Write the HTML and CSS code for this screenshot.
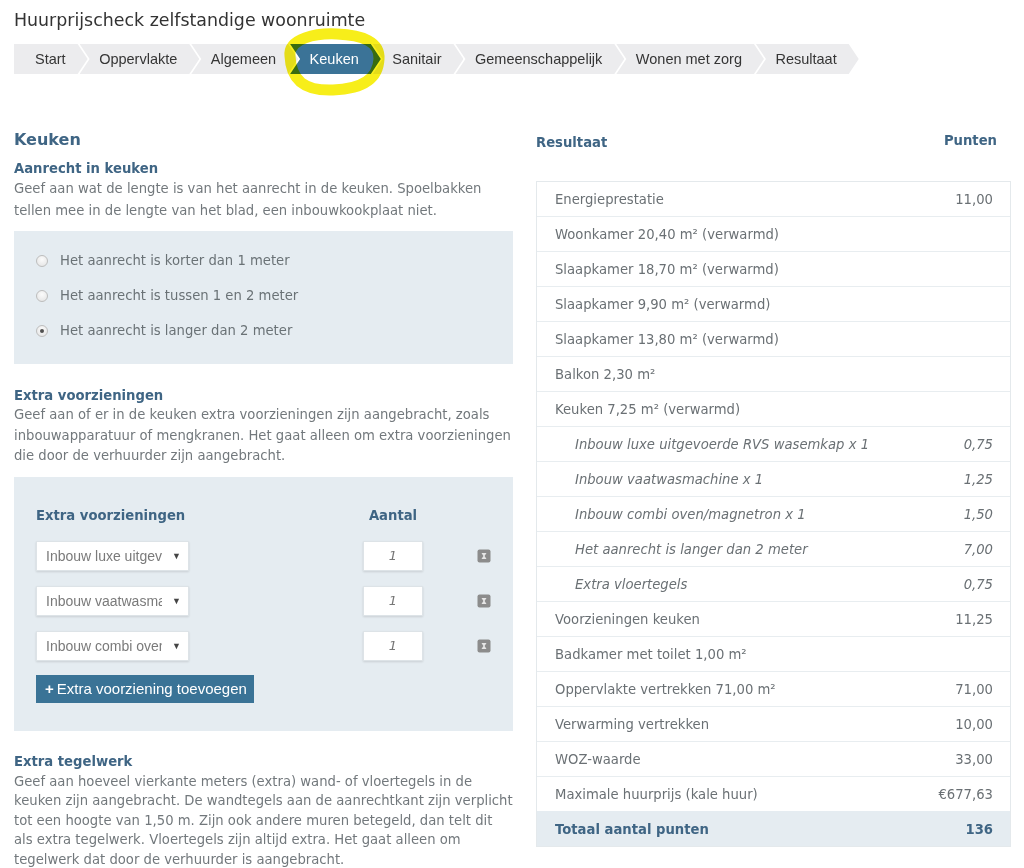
FILE: index.html
```html
<!DOCTYPE html>
<html lang="nl">
<head>
<meta charset="utf-8">
<title>Huurprijscheck zelfstandige woonruimte</title>
<link rel="stylesheet" href="styles.css">
</head>
<body>
<div class="page">
  <h1 class="title">Huurprijscheck zelfstandige woonruimte</h1>
  <nav class="crumbs">
    <span class="crumb first">Start</span>
    <span class="crumb">Oppervlakte</span>
    <span class="crumb">Algemeen</span>
    <span class="crumb active">Keuken</span>
    <span class="crumb">Sanitair</span>
    <span class="crumb">Gemeenschappelijk</span>
    <span class="crumb">Wonen met zorg</span>
    <span class="crumb">Resultaat</span>
  </nav>
  <svg class="highlight" width="112" height="76" viewBox="0 0 112 76" aria-hidden="true">
    <path d="M13 30 C 11 12, 40 7, 60 8 C 86 9, 103 16, 102 33 C 101 54, 84 63, 56 64 C 28 65, 14 55, 13 30 Z" fill="none" stroke="#f7ee1a" stroke-width="11"/>
  </svg>

  <div class="columns">
    <section class="form">
      <h2 class="section-title">Keuken</h2>

      <h3 class="q-title">Aanrecht in keuken</h3>
      <p class="q-desc q-desc-wide">Geef aan wat de lengte is van het aanrecht in de keuken. Spoelbakken tellen mee in de lengte van het blad, een inbouwkookplaat niet.</p>
      <div class="panel radios">
        <label class="radio"><span class="dot"></span>Het aanrecht is korter dan 1 meter</label>
        <label class="radio"><span class="dot"></span>Het aanrecht is tussen 1 en 2 meter</label>
        <label class="radio"><span class="dot checked"></span>Het aanrecht is langer dan 2 meter</label>
      </div>

      <h3 class="q-title q-gap">Extra voorzieningen</h3>
      <p class="q-desc">Geef aan of er in de keuken extra voorzieningen zijn aangebracht, zoals inbouwapparatuur of mengkranen. Het gaat alleen om extra voorzieningen die door de verhuurder zijn aangebracht.</p>
      <div class="panel items">
        <div class="item-grid">
          <div class="col-head">Extra voorzieningen</div>
          <div class="col-head center">Aantal</div>
          <div></div>

          <div class="select"><span class="select-text">Inbouw luxe uitgevoerde</span><span class="caret">&#9660;</span></div>
          <div class="number">1</div>
          <svg class="del" width="14" height="14" viewBox="0 0 14 14"><rect x="0.5" y="0.5" width="13" height="13" rx="2" fill="#8c8c8c"/><path d="M4.5 4 L9.5 4 L7.6 7 L9.5 10 L4.5 10 L6.4 7 Z" fill="#e6e6e6"/></svg>

          <div class="select"><span class="select-text">Inbouw vaatwasmachine</span><span class="caret">&#9660;</span></div>
          <div class="number">1</div>
          <svg class="del" width="14" height="14" viewBox="0 0 14 14"><rect x="0.5" y="0.5" width="13" height="13" rx="2" fill="#8c8c8c"/><path d="M4.5 4 L9.5 4 L7.6 7 L9.5 10 L4.5 10 L6.4 7 Z" fill="#e6e6e6"/></svg>

          <div class="select"><span class="select-text">Inbouw combi oven/magnetron</span><span class="caret">&#9660;</span></div>
          <div class="number">1</div>
          <svg class="del" width="14" height="14" viewBox="0 0 14 14"><rect x="0.5" y="0.5" width="13" height="13" rx="2" fill="#8c8c8c"/><path d="M4.5 4 L9.5 4 L7.6 7 L9.5 10 L4.5 10 L6.4 7 Z" fill="#e6e6e6"/></svg>
        </div>
        <button class="add-btn" type="button"><b>+</b> Extra voorziening toevoegen</button>
      </div>

      <h3 class="q-title q-gap2">Extra tegelwerk</h3>
      <p class="q-desc q-desc-tight">Geef aan hoeveel vierkante meters (extra) wand- of vloertegels in de keuken zijn aangebracht. De wandtegels aan de aanrechtkant zijn verplicht tot een hoogte van 1,50 m. Zijn ook andere muren betegeld, dan telt dit als extra tegelwerk. Vloertegels zijn altijd extra. Het gaat alleen om tegelwerk dat door de verhuurder is aangebracht.</p>
    </section>

    <aside class="result">
      <div class="result-head"><span>Resultaat</span><span class="punten">Punten</span></div>
      <div class="result-table">
        <div class="row"><span>Energieprestatie</span><span>11,00</span></div>
        <div class="row"><span>Woonkamer 20,40 m² (verwarmd)</span><span></span></div>
        <div class="row"><span>Slaapkamer 18,70 m² (verwarmd)</span><span></span></div>
        <div class="row"><span>Slaapkamer 9,90 m² (verwarmd)</span><span></span></div>
        <div class="row"><span>Slaapkamer 13,80 m² (verwarmd)</span><span></span></div>
        <div class="row"><span>Balkon 2,30 m²</span><span></span></div>
        <div class="row"><span>Keuken 7,25 m² (verwarmd)</span><span></span></div>
        <div class="row sub"><span>Inbouw luxe uitgevoerde RVS wasemkap x 1</span><span>0,75</span></div>
        <div class="row sub"><span>Inbouw vaatwasmachine x 1</span><span>1,25</span></div>
        <div class="row sub"><span>Inbouw combi oven/magnetron x 1</span><span>1,50</span></div>
        <div class="row sub"><span>Het aanrecht is langer dan 2 meter</span><span>7,00</span></div>
        <div class="row sub"><span>Extra vloertegels</span><span>0,75</span></div>
        <div class="row"><span>Voorzieningen keuken</span><span>11,25</span></div>
        <div class="row"><span>Badkamer met toilet 1,00 m²</span><span></span></div>
        <div class="row"><span>Oppervlakte vertrekken 71,00 m²</span><span>71,00</span></div>
        <div class="row"><span>Verwarming vertrekken</span><span>10,00</span></div>
        <div class="row"><span>WOZ-waarde</span><span>33,00</span></div>
        <div class="row"><span>Maximale huurprijs (kale huur)</span><span>€677,63</span></div>
        <div class="row total"><span>Totaal aantal punten</span><span>136</span></div>
      </div>
    </aside>
  </div>
</div>
</body>
</html>
```
FILE: styles.css
```css
* { box-sizing: border-box; }
html, body { margin: 0; padding: 0; background: #fff; }
body {
  font-family: "DejaVu Sans", Verdana, sans-serif;
  font-size: 13.2px;
  color: #72787c;
}
.page {
  position: relative;
  padding: 10px 0 0 14px;
  width: 1024px;
}
.title {
  margin: 0;
  font-size: 17.4px;
  line-height: 21px;
  font-weight: normal;
  color: #333;
}

/* breadcrumb */
.crumbs {
  display: flex;
  height: 30px;
  margin-top: 13px;
  font-family: "Liberation Sans", Arial, sans-serif;
  font-size: 14.5px;
}
.crumb {
  display: flex;
  align-items: center;
  height: 30px;
  padding: 0 22px 0 19.5px;
  margin-left: -8px;
  background: #ececee;
  color: #353535;
  clip-path: polygon(0 0, calc(100% - 10px) 0, 100% 50%, calc(100% - 10px) 100%, 0 100%, 10px 50%);
}
.crumb.first {
  margin-left: 0;
  padding-left: 21px;
  clip-path: polygon(0 0, calc(100% - 10px) 0, 100% 50%, calc(100% - 10px) 100%, 0 100%);
}
.crumb.active {
  background: #3b7397;
  color: #fff;
}
.highlight {
  position: absolute;
  left: 277px;
  top: 26px;
  mix-blend-mode: multiply;
  pointer-events: none;
}

/* columns */
.columns {
  display: grid;
  grid-template-columns: 499px 475px;
  column-gap: 23px;
  margin-top: 56px;
  align-items: start;
}

.section-title {
  margin: 0;
  font-size: 16px;
  line-height: 20px;
  font-weight: bold;
  color: #3f6584;
}
.q-title {
  margin: 11px 0 0;
  font-size: 13.2px;
  line-height: 16px;
  font-weight: bold;
  color: #3f6584;
}
.q-gap { margin-top: 24px; }
.q-gap2 { margin-top: 23px; }
.q-desc {
  margin: 1px 0 10px;
  line-height: 20.5px;
}
.q-desc-wide { line-height: 21.5px; }
.q-desc-tight { line-height: 19.6px; margin-top: 2px; }

.panel {
  background: #e5ecf1;
}
.radios {
  padding: 12px 0 16px 22px;
}
.radio {
  display: flex;
  align-items: center;
  height: 35px;
  color: #6a7276;
}
.dot {
  width: 12px;
  height: 12px;
  border-radius: 50%;
  border: 1px solid #bdbdbd;
  background: radial-gradient(circle at 50% 35%, #fbfbfb 0%, #e2e2e2 100%);
  margin: 0 12px 0 0;
  position: relative;
  flex: none;
}
.dot.checked::after {
  content: "";
  position: absolute;
  left: 3px;
  top: 3px;
  width: 4px;
  height: 4px;
  border-radius: 50%;
  background: #505050;
}

.items {
  padding: 30px 0 28px 22px;
}
.item-grid {
  display: grid;
  grid-template-columns: 327px 60px 68px;
  row-gap: 15px;
  align-items: center;
}
.col-head {
  font-weight: bold;
  color: #3f6584;
  line-height: 18px;
  margin-bottom: 1px;
}
.col-head.center { text-align: center; white-space: nowrap; }
.select {
  display: flex;
  align-items: center;
  width: 153px;
  height: 30px;
  background: #fff;
  border: 1px solid #dde3e7;
  box-shadow: 0 1px 2px rgba(0,0,0,0.12);
  padding: 0 0 0 9px;
  font-family: "Liberation Sans", Arial, sans-serif;
  font-size: 14px;
  color: #7a7a7a;
}
.select-text {
  width: 116px;
  overflow: hidden;
  white-space: nowrap;
}
.caret {
  font-size: 9px;
  color: #444;
  margin-left: 10px;
}
.number {
  height: 30px;
  background: #fff;
  border: 1px solid #dde3e7;
  box-shadow: 0 1px 2px rgba(0,0,0,0.12);
  display: flex;
  align-items: center;
  justify-content: center;
  font-style: italic;
  color: #777;
  font-size: 13px;
}
.del { justify-self: end; display: block; }

.add-btn {
  display: inline-flex;
  align-items: center;
  height: 28px;
  margin-top: 14px;
  padding: 0 7px 0 9px;
  border: 0;
  background: #3a7396;
  color: #fff;
  font-family: "Liberation Sans", Arial, sans-serif;
  font-size: 15px;
}
.add-btn b { margin-right: 3px; }

/* result */
.result-head {
  display: flex;
  justify-content: space-between;
  align-items: flex-start;
  padding-right: 14px;
  margin-top: 4px;
  font-weight: bold;
  color: #3f6584;
  line-height: 18px;
}
.punten { margin-top: -2px; }
.result-table {
  margin-top: 29px;
  border: 1px solid #e4e9ec;
}
.row {
  display: flex;
  justify-content: space-between;
  align-items: center;
  height: 35px;
  padding: 0 17px 0 18px;
  border-top: 1px solid #e8edf0;
  color: #6a7074;
}
.row:first-child { border-top: 0; height: 34px; }
.row.sub { font-style: italic; padding-left: 38px; }
.row.total {
  background: #e5ecf1;
  font-weight: bold;
  color: #3f6584;
  border-top-color: #e5ecf1;
}
```
